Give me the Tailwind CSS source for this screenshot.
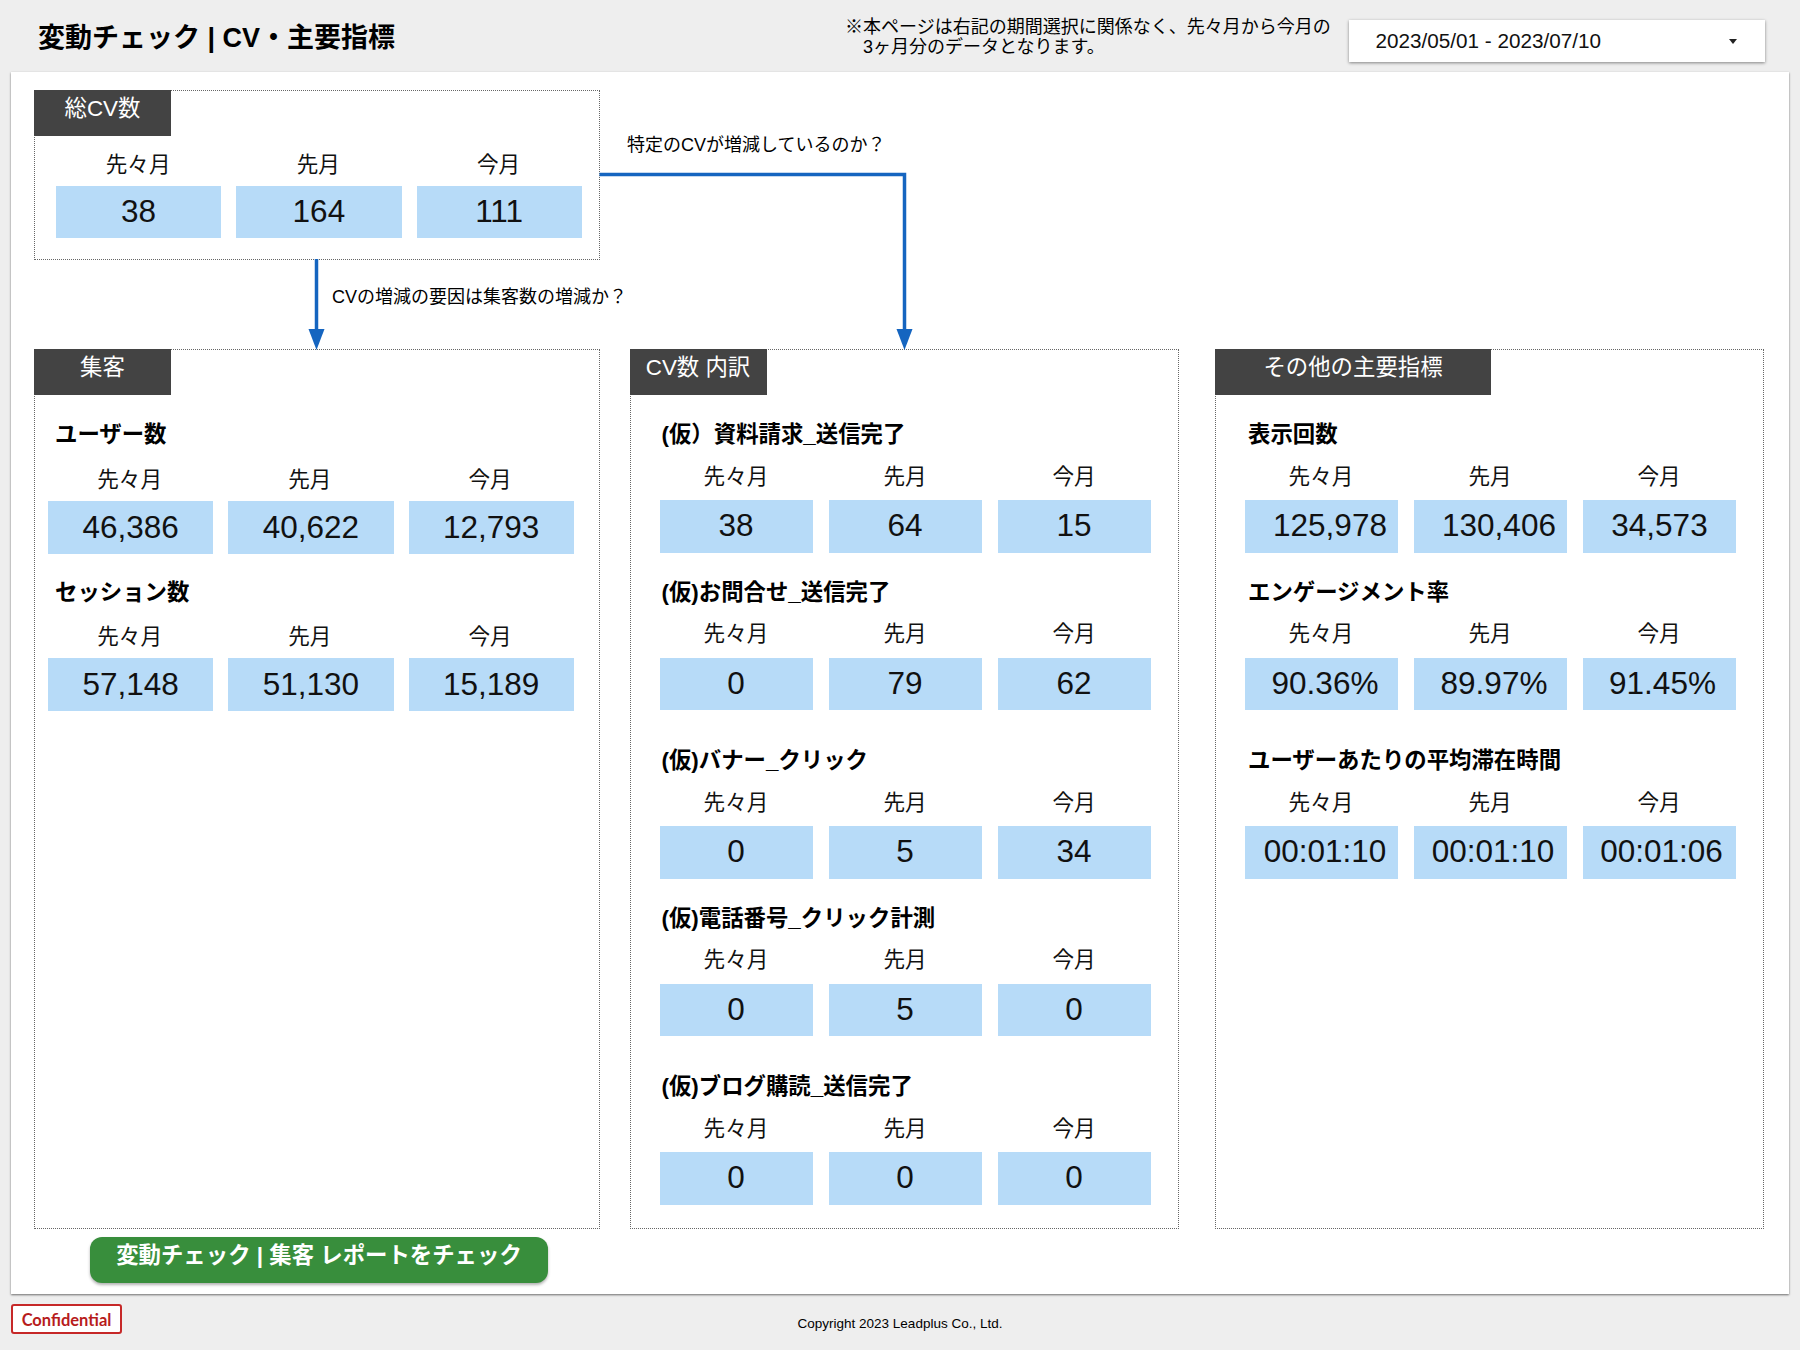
<!DOCTYPE html>
<html lang="ja">
<head>
<meta charset="utf-8">
<title>変動チェック | CV・主要指標</title>
<script src="https://cdn.jsdelivr.net/npm/@tailwindcss/browser@4"></script>
</head>
<body class="w-[1800px] h-[1350px] overflow-hidden bg-[#eeeeee] text-[#111111] [font-family:'Liberation_Sans','Noto_Sans_CJK_JP',sans-serif]">
<header class="h-[72px] flex items-start">
  <h1 class="ml-[38px] mt-[19px] w-[807px] text-[27px] leading-[38px] font-bold text-black">変動チェック | CV・主要指標</h1>
  <p class="mt-[17px] w-[503.500px] text-[18px] leading-[20px] text-black">※本ページは右記の期間選択に関係なく、先々月から今月の<br>　3ヶ月分のデータとなります。</p>
  <div class="mt-[20px] w-[416px] h-[42px] bg-white shadow-[0_1px_3px_rgba(0,0,0,0.45)] flex items-center justify-between pl-[27px] pr-[28px]">
    <span class="text-[20.700px] text-[#111111]">2023/05/01 - 2023/07/10</span>
    <span class="w-0 h-0 border-x-[4px] border-x-transparent border-t-[5px] border-t-[#222222]"></span>
  </div>
</header>

<main class="relative ml-[11px] w-[1778px] h-[1222px] bg-white shadow-[0_1px_2px_rgba(0,0,0,0.55)] pl-[23px] pt-[18px]">
  <!-- 総CV数 -->
  <section class="w-[566px] h-[170px] border border-dotted border-[#666666]">
    <div class="-mt-px -ml-px w-[137px] h-[46px] bg-[#434343] text-white text-center text-[22.400px] leading-[37px]">総CV数</div>
    <div class="ml-[21px] mt-[14px] grid grid-cols-[165.250px_165.250px_165.250px] gap-x-[15px]">
      <div class="h-[30px] pr-[1px] text-center text-[21.600px] leading-[30px]">先々月</div>
      <div class="h-[30px] pr-[1px] text-center text-[21.600px] leading-[30px]">先月</div>
      <div class="h-[30px] pr-[1px] text-center text-[21.600px] leading-[30px]">今月</div>
      <div class="mt-[6px] h-[52px] bg-[#b7dbf8] text-center text-[31.500px] leading-[51px]">38</div>
      <div class="mt-[6px] h-[52px] bg-[#b7dbf8] text-center text-[31.500px] leading-[51px]">164</div>
      <div class="mt-[6px] h-[52px] bg-[#b7dbf8] text-center text-[31.500px] leading-[51px]">111</div>
    </div>
  </section>

  <!-- connectors -->
  <svg class="absolute left-0 top-0 pointer-events-none" width="1778" height="290" viewBox="0 0 1778 290" fill="none">
    <path d="M305.500 187V258" stroke="#1565c0" stroke-width="3.500"/>
    <path d="M297.500 257H313.500L305.500 278Z" fill="#1565c0"/>
    <path d="M588.500 102.500H893.500V258" stroke="#1565c0" stroke-width="3.500"/>
    <path d="M885.500 257H901.500L893.500 278Z" fill="#1565c0"/>
  </svg>
  <p class="absolute left-[321px] top-[212px] text-[18px] leading-[26px] text-black">CVの増減の要因は集客数の増減か？</p>
  <p class="absolute left-[616px] top-[60px] text-[18px] leading-[26px] text-black">特定のCVが増減しているのか？</p>

  <div class="mt-[89px] flex items-start">
    <!-- 集客 -->
    <section class="w-[566px] h-[880px] border border-dotted border-[#666666]">
      <div class="-mt-px -ml-px w-[137px] h-[46px] bg-[#434343] text-white text-center text-[22.400px] leading-[37px]">集客</div>
      <div class="mt-[24px]">
        <h2 class="pl-[20px] h-[30px] text-[22.400px] leading-[32px] font-bold text-black">ユーザー数</h2>
        <div class="ml-[13px] mt-[16px] grid grid-cols-[165.250px_165.250px_165.250px] gap-x-[15px]">
          <div class="h-[30px] pr-[2px] text-center text-[21.600px] leading-[30px]">先々月</div>
          <div class="h-[30px] pr-[2px] text-center text-[21.600px] leading-[30px]">先月</div>
          <div class="h-[30px] pr-[2px] text-center text-[21.600px] leading-[30px]">今月</div>
          <div class="mt-[6px] h-[53px] bg-[#b7dbf8] text-center text-[31.500px] leading-[52px]">46,386</div>
          <div class="mt-[6px] h-[53px] bg-[#b7dbf8] text-center text-[31.500px] leading-[52px]">40,622</div>
          <div class="mt-[6px] h-[53px] bg-[#b7dbf8] text-center text-[31.500px] leading-[52px]">12,793</div>
        </div>
      </div>
      <div class="mt-[23px]">
        <h2 class="pl-[20px] h-[30px] text-[22.400px] leading-[32px] font-bold text-black">セッション数</h2>
        <div class="ml-[13px] mt-[15px] grid grid-cols-[165.250px_165.250px_165.250px] gap-x-[15px]">
          <div class="h-[30px] pr-[2px] text-center text-[21.600px] leading-[30px]">先々月</div>
          <div class="h-[30px] pr-[2px] text-center text-[21.600px] leading-[30px]">先月</div>
          <div class="h-[30px] pr-[2px] text-center text-[21.600px] leading-[30px]">今月</div>
          <div class="mt-[6px] h-[53px] bg-[#b7dbf8] text-center text-[31.500px] leading-[52px]">57,148</div>
          <div class="mt-[6px] h-[53px] bg-[#b7dbf8] text-center text-[31.500px] leading-[52px]">51,130</div>
          <div class="mt-[6px] h-[53px] bg-[#b7dbf8] text-center text-[31.500px] leading-[52px]">15,189</div>
        </div>
      </div>
    </section>

    <!-- CV数 内訳 -->
    <section class="ml-[29.500px] w-[549px] h-[880px] border border-dotted border-[#666666]">
      <div class="-mt-px -ml-px w-[137px] h-[46px] bg-[#434343] text-white text-center text-[22.400px] leading-[37px]">CV数 内訳</div>
      <div class="mt-[24px]">
        <h2 class="pl-[31px] h-[30px] text-[22.400px] leading-[32px] font-bold text-black">(仮）資料請求_送信完了</h2>
        <div class="ml-[29px] mt-[12.500px] grid grid-cols-[153px_153px_153px] gap-x-[16px]">
          <div class="h-[30px] text-center text-[21.600px] leading-[30px]">先々月</div>
          <div class="h-[30px] text-center text-[21.600px] leading-[30px]">先月</div>
          <div class="h-[30px] text-center text-[21.600px] leading-[30px]">今月</div>
          <div class="mt-[8.500px] h-[52.500px] bg-[#b7dbf8] text-center text-[31.500px] leading-[51px]">38</div>
          <div class="mt-[8.500px] h-[52.500px] bg-[#b7dbf8] text-center text-[31.500px] leading-[51px]">64</div>
          <div class="mt-[8.500px] h-[52.500px] bg-[#b7dbf8] text-center text-[31.500px] leading-[51px]">15</div>
        </div>
      </div>
      <div class="mt-[24px]">
        <h2 class="pl-[31px] h-[30px] text-[22.400px] leading-[32px] font-bold text-black">(仮)お問合せ_送信完了</h2>
        <div class="ml-[29px] mt-[12.500px] grid grid-cols-[153px_153px_153px] gap-x-[16px]">
          <div class="h-[30px] text-center text-[21.600px] leading-[30px]">先々月</div>
          <div class="h-[30px] text-center text-[21.600px] leading-[30px]">先月</div>
          <div class="h-[30px] text-center text-[21.600px] leading-[30px]">今月</div>
          <div class="mt-[8.500px] h-[52.500px] bg-[#b7dbf8] text-center text-[31.500px] leading-[51px]">0</div>
          <div class="mt-[8.500px] h-[52.500px] bg-[#b7dbf8] text-center text-[31.500px] leading-[51px]">79</div>
          <div class="mt-[8.500px] h-[52.500px] bg-[#b7dbf8] text-center text-[31.500px] leading-[51px]">62</div>
        </div>
      </div>
      <div class="mt-[35px]">
        <h2 class="pl-[31px] h-[30px] text-[22.400px] leading-[32px] font-bold text-black">(仮)バナー_クリック</h2>
        <div class="ml-[29px] mt-[12.500px] grid grid-cols-[153px_153px_153px] gap-x-[16px]">
          <div class="h-[30px] text-center text-[21.600px] leading-[30px]">先々月</div>
          <div class="h-[30px] text-center text-[21.600px] leading-[30px]">先月</div>
          <div class="h-[30px] text-center text-[21.600px] leading-[30px]">今月</div>
          <div class="mt-[8.500px] h-[52.500px] bg-[#b7dbf8] text-center text-[31.500px] leading-[51px]">0</div>
          <div class="mt-[8.500px] h-[52.500px] bg-[#b7dbf8] text-center text-[31.500px] leading-[51px]">5</div>
          <div class="mt-[8.500px] h-[52.500px] bg-[#b7dbf8] text-center text-[31.500px] leading-[51px]">34</div>
        </div>
      </div>
      <div class="mt-[24px]">
        <h2 class="pl-[31px] h-[30px] text-[22.400px] leading-[32px] font-bold text-black">(仮)電話番号_クリック計測</h2>
        <div class="ml-[29px] mt-[12.500px] grid grid-cols-[153px_153px_153px] gap-x-[16px]">
          <div class="h-[30px] text-center text-[21.600px] leading-[30px]">先々月</div>
          <div class="h-[30px] text-center text-[21.600px] leading-[30px]">先月</div>
          <div class="h-[30px] text-center text-[21.600px] leading-[30px]">今月</div>
          <div class="mt-[8.500px] h-[52.500px] bg-[#b7dbf8] text-center text-[31.500px] leading-[51px]">0</div>
          <div class="mt-[8.500px] h-[52.500px] bg-[#b7dbf8] text-center text-[31.500px] leading-[51px]">5</div>
          <div class="mt-[8.500px] h-[52.500px] bg-[#b7dbf8] text-center text-[31.500px] leading-[51px]">0</div>
        </div>
      </div>
      <div class="mt-[35px]">
        <h2 class="pl-[31px] h-[30px] text-[22.400px] leading-[32px] font-bold text-black">(仮)ブログ購読_送信完了</h2>
        <div class="ml-[29px] mt-[12.500px] grid grid-cols-[153px_153px_153px] gap-x-[16px]">
          <div class="h-[30px] text-center text-[21.600px] leading-[30px]">先々月</div>
          <div class="h-[30px] text-center text-[21.600px] leading-[30px]">先月</div>
          <div class="h-[30px] text-center text-[21.600px] leading-[30px]">今月</div>
          <div class="mt-[8.500px] h-[52.500px] bg-[#b7dbf8] text-center text-[31.500px] leading-[51px]">0</div>
          <div class="mt-[8.500px] h-[52.500px] bg-[#b7dbf8] text-center text-[31.500px] leading-[51px]">0</div>
          <div class="mt-[8.500px] h-[52.500px] bg-[#b7dbf8] text-center text-[31.500px] leading-[51px]">0</div>
        </div>
      </div>
    </section>

    <!-- その他の主要指標 -->
    <section class="ml-[36.500px] w-[549px] h-[880px] border border-dotted border-[#666666]">
      <div class="-mt-px -ml-px w-[276px] h-[46px] bg-[#434343] text-white text-center text-[22.400px] leading-[37px]">その他の主要指標</div>
      <div class="mt-[24px]">
        <h2 class="pl-[32px] h-[30px] text-[22.400px] leading-[32px] font-bold text-black">表示回数</h2>
        <div class="ml-[29px] mt-[12.500px] grid grid-cols-[153px_153px_153px] gap-x-[16px]">
          <div class="h-[30px] pr-[1px] text-center text-[21.600px] leading-[30px]">先々月</div>
          <div class="h-[30px] pr-[1px] text-center text-[21.600px] leading-[30px]">先月</div>
          <div class="h-[30px] pr-[1px] text-center text-[21.600px] leading-[30px]">今月</div>
          <div class="mt-[8.500px] h-[52.500px] pl-[17px] bg-[#b7dbf8] text-center text-[31.500px] leading-[51px]">125,978</div>
          <div class="mt-[8.500px] h-[52.500px] pl-[17px] bg-[#b7dbf8] text-center text-[31.500px] leading-[51px]">130,406</div>
          <div class="mt-[8.500px] h-[52.500px] bg-[#b7dbf8] text-center text-[31.500px] leading-[51px]">34,573</div>
        </div>
      </div>
      <div class="mt-[24px]">
        <h2 class="pl-[32px] h-[30px] text-[22.400px] leading-[32px] font-bold text-black">エンゲージメント率</h2>
        <div class="ml-[29px] mt-[12.500px] grid grid-cols-[153px_153px_153px] gap-x-[16px]">
          <div class="h-[30px] pr-[1px] text-center text-[21.600px] leading-[30px]">先々月</div>
          <div class="h-[30px] pr-[1px] text-center text-[21.600px] leading-[30px]">先月</div>
          <div class="h-[30px] pr-[1px] text-center text-[21.600px] leading-[30px]">今月</div>
          <div class="mt-[8.500px] h-[52.500px] pl-[7px] bg-[#b7dbf8] text-center text-[31.500px] leading-[51px]">90.36%</div>
          <div class="mt-[8.500px] h-[52.500px] pl-[7px] bg-[#b7dbf8] text-center text-[31.500px] leading-[51px]">89.97%</div>
          <div class="mt-[8.500px] h-[52.500px] pl-[6px] bg-[#b7dbf8] text-center text-[31.500px] leading-[51px]">91.45%</div>
        </div>
      </div>
      <div class="mt-[35px]">
        <h2 class="pl-[32px] h-[30px] text-[22.400px] leading-[32px] font-bold text-black">ユーザーあたりの平均滞在時間</h2>
        <div class="ml-[29px] mt-[12.500px] grid grid-cols-[153px_153px_153px] gap-x-[16px]">
          <div class="h-[30px] pr-[1px] text-center text-[21.600px] leading-[30px]">先々月</div>
          <div class="h-[30px] pr-[1px] text-center text-[21.600px] leading-[30px]">先月</div>
          <div class="h-[30px] pr-[1px] text-center text-[21.600px] leading-[30px]">今月</div>
          <div class="mt-[8.500px] h-[52.500px] pl-[7px] bg-[#b7dbf8] text-center text-[31.500px] leading-[51px]">00:01:10</div>
          <div class="mt-[8.500px] h-[52.500px] pl-[5px] bg-[#b7dbf8] text-center text-[31.500px] leading-[51px]">00:01:10</div>
          <div class="mt-[8.500px] h-[52.500px] pl-[4px] bg-[#b7dbf8] text-center text-[31.500px] leading-[51px]">00:01:06</div>
        </div>
      </div>
    </section>
  </div>

  <a class="block ml-[56px] mt-[8px] w-[458px] h-[46px] rounded-[12px] bg-[#388e3c] shadow-[0_2px_3px_rgba(0,0,0,0.3)] text-white text-center text-[22.400px] leading-[37px] font-bold">変動チェック | 集客 レポートをチェック</a>
</main>

<footer class="relative h-[56px]">
  <div class="absolute left-[11px] top-[10px] w-[111px] h-[30px] bg-white border-2 border-[#c62828] rounded-[3px] text-center text-[#b71c1c] text-[16.500px] leading-[28px] font-bold [font-family:Lato,sans-serif]">Confidential</div>
  <p class="text-center pt-[20px] text-[13.500px] leading-[20px] text-black">Copyright 2023 Leadplus Co., Ltd.</p>
</footer>
</body>
</html>
